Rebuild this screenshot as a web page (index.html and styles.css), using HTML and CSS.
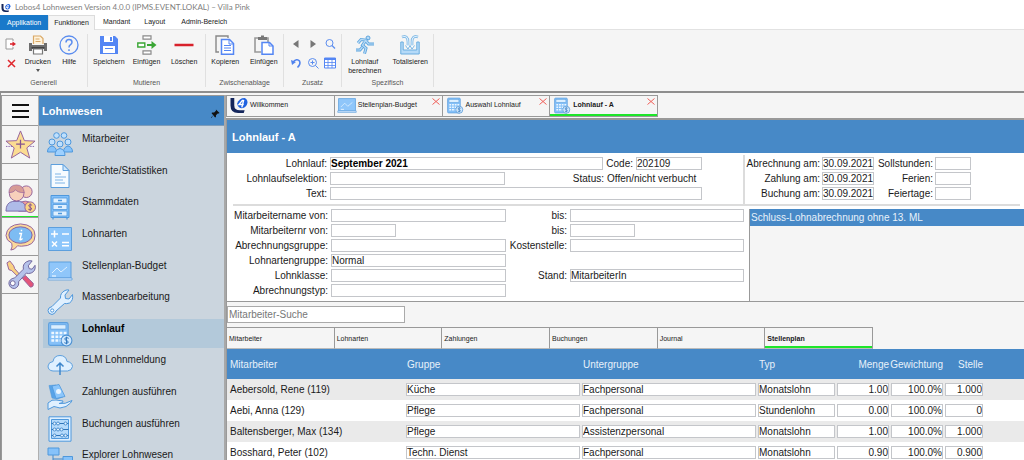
FILE: index.html
```html
<!DOCTYPE html>
<html lang="de">
<head>
<meta charset="utf-8">
<title>Lobos4 Lohnwesen</title>
<link rel="stylesheet" href="styles.css">
</head>
<body>
<svg class="sprite" aria-hidden="true">
  <symbol id="logo" viewBox="0 0 20 18">
    <path d="M1 1h4v8q0 5 6 5h5l-1 3H9Q1 17 1 9z" fill="#14265c"/>
    <path d="M8 7q2-6 8-6 3 1 3 5-1 5-6 6-4 0-5-5z" fill="#1f62e0"/>
    <path d="M14 3l-4 5h5M15 3l-2 8" fill="none" stroke="#fff" stroke-width="1.500"/>
  </symbol>
  <symbol id="chart" viewBox="0 0 26 20">
    <path d="M2 1h22v16H2z" fill="#8fc6fa" stroke="#5d9fdd"/>
    <path d="M1 17h24v2H1z" fill="#d9ecff" stroke="#5d9fdd" stroke-width=".8"/>
    <path d="M5 12l5-5 4 4 6-5" fill="none" stroke="#dff0ff"/><path d="M5 15h4" stroke="#fff"/>
  </symbol>
  <symbol id="calc" viewBox="0 0 24 24">
    <rect x="1.500" y="1.500" width="18" height="21" rx="1.500" fill="#85c0f8" stroke="#5d9fdd"/>
    <rect x="3.500" y="3.500" width="14" height="4" fill="#dcefff" stroke="#5d9fdd" stroke-width=".7"/>
    <path d="M4 11h14M4 14.500h14M4 18h14" stroke="#eef7ff" stroke-width="2.300" stroke-dasharray="2.600 1.200"/>
    <circle cx="18" cy="18" r="5" fill="#cfe7fd" stroke="#4b90d2"/>
    <path d="M20 16q-2-1.500-3.500 0-.5 1.500 1.500 2 2 .6 1.500 2-1.500 1.500-3.500 0M18 14.500v7" fill="none" stroke="#3278bd" stroke-width=".9"/>
  </symbol>
  <symbol id="close" viewBox="0 0 8 7"><path d="M.5.5l7 6M7.500.5l-7 6" stroke="#f0605a" fill="none"/></symbol>
</svg>

<header class="titlebar"><svg class="app-logo"><use href="#logo"/></svg><h1>Lobos4 Lohnwesen Version 4.0.0 (IPMS.EVENT.LOKAL) – Villa Pink</h1></header>

<nav class="menu">
  <button class="menu-tab file">Applikation</button>
  <button class="menu-tab open">Funktionen</button>
  <button class="menu-tab">Mandant</button>
  <button class="menu-tab">Layout</button>
  <button class="menu-tab">Admin-Bereich</button>
</nav>

<section class="ribbon">
  <div class="group generell">
    <div class="tools">
      <div class="stack">
        <button aria-label="Beenden"><svg class="tiny" viewBox="0 0 12 12"><path d="M8 3V1H1v10h7V9" fill="#fff" stroke="#999"/><path d="M5 6h3" stroke="#d9232c" stroke-width="1.500"/><path d="M7.500 3.500L11 6 7.500 8.500z" fill="#d9232c"/></svg></button>
        <button aria-label="Schliessen"><svg class="tiny" viewBox="0 0 12 12"><path d="M3 3l7 7M10 3l-7 7" stroke="#e0262c" stroke-width="1.500"/></svg></button>
      </div>
      <button class="tool"><svg viewBox="0 0 20 20"><path d="M5.500 9V1h7l2.500 2.500V9" fill="#fff3dc" stroke="#d9a866" stroke-width="1.200"/><path d="M7.500 4h4M7.500 6.500h5" stroke="#d9a866"/><path d="M1 8h3v2h12V8h3v8h-3v-2H4v2H1z" fill="#6e6e6e"/><path d="M3.500 12h13v1.500h-13z" fill="#444"/><path d="M5.500 14v5h9v-5z" fill="#fff" stroke="#777" stroke-width="1.200"/></svg>Drucken<i class="caret"></i></button>
      <button class="tool"><svg viewBox="0 0 20 20"><circle cx="10" cy="10" r="9" fill="none" stroke="#5b8def" stroke-width="1.300"/><path d="M7 7.500q0-3 3-3t3 2.700q0 1.600-1.700 2.600-1.300.8-1.300 2.700M10 14.200v1.700" fill="none" stroke="#5b8def" stroke-width="1.500"/></svg>Hilfe</button>
    </div><h2>Generell</h2>
  </div>
  <div class="group mutieren">
    <div class="tools">
      <button class="tool"><svg viewBox="0 0 20 20"><path d="M1 1h15l3 3v15H1z" fill="#5486f4"/><path d="M5 1h9v6H5z" fill="#fff"/><path d="M11 2h2v4h-2z" fill="#5486f4"/><path d="M4 11h12v7H4z" fill="#fff"/><path d="M6 13.500h8" stroke="#5486f4"/></svg>Speichern</button>
      <button class="tool"><svg viewBox="0 0 20 20"><path d="M6 .8h8v3.400H6zM6 15.800h8v3.400H6z" fill="#fff" stroke="#8a8a8a" stroke-width="1.200"/><path d="M.8 8h7v4h-7z" fill="#fff" stroke="#3aa635" stroke-width="1.400"/><path d="M10 10h6" stroke="#3aa635" stroke-width="2"/><path d="M14.500 6l5 4-5 4z" fill="#3aa635"/></svg>Einfügen</button>
      <button class="tool"><svg viewBox="0 0 20 20"><path d="M.5 10h19" stroke="#d8212b" stroke-width="2.500"/></svg>Löschen</button>
    </div><h2>Mutieren</h2>
  </div>
  <div class="group ablage">
    <div class="tools">
      <button class="tool"><svg viewBox="0 0 20 20"><path d="M4 17H1V1h12v2" fill="none" stroke="#888" stroke-width="1.400"/><path d="M6.500 4.500h8l4 4v10.700h-12z" fill="#fff" stroke="#5486f4" stroke-width="1.500"/><path d="M14 4.500V9h4.500" fill="none" stroke="#5486f4"/><path d="M9 10.500h7M9 13h7M9 15.500h7" stroke="#5486f4"/></svg>Kopieren</button>
      <button class="tool"><svg viewBox="0 0 20 20"><path d="M7 17H1V3h3M12 3h2v4" fill="none" stroke="#999" stroke-width="1.600"/><path d="M4 2h3V.5h3V2h3v3H4z" fill="#777"/><path d="M8 7.500h7.500L19 11v8.200H8z" fill="#fff" stroke="#5486f4" stroke-width="1.500"/><path d="M15 7.500V11h4" fill="none" stroke="#5486f4"/></svg>Einfügen</button>
    </div><h2>Zwischenablage</h2>
  </div>
  <div class="group zusatz">
    <div class="tools mini">
      <button aria-label="Zurück"><svg class="tiny" viewBox="0 0 12 12"><path d="M8.500 2v8L3 6z" fill="#777"/></svg></button>
      <button aria-label="Vor"><svg class="tiny" viewBox="0 0 12 12"><path d="M3.500 2v8L9 6z" fill="#777"/></svg></button>
      <button aria-label="Suchen"><svg class="tiny" viewBox="0 0 12 12"><circle cx="5.500" cy="5" r="3.500" fill="none" stroke="#5b8def"/><path d="M8 7.500l3 3" stroke="#5b8def" stroke-width="1.200"/></svg></button>
      <button aria-label="Rückgängig"><svg class="tiny" viewBox="0 0 12 12"><path d="M3 5q4-4 6.500-1Q11 7 7.500 10.500" fill="none" stroke="#4f82ee" stroke-width="1.600"/><path d="M1 3l1 5 4-3z" fill="#4f82ee"/></svg></button>
      <button aria-label="Vergrössern"><svg class="tiny" viewBox="0 0 12 12"><circle cx="5.500" cy="5.500" r="4" fill="none" stroke="#5b8def"/><path d="M8.500 8.500l3 3M3.500 5.500h4M5.500 3.500v4" stroke="#5b8def"/></svg></button>
      <button aria-label="Tabelle"><svg class="tiny" viewBox="0 0 12 12"><path d="M.5 1h11v10H.5z" fill="#fff" stroke="#5486f4"/><path d="M0 2h12" stroke="#5486f4" stroke-width="2"/><path d="M0 5.500h12M0 8.500h12M4 2v9M8 2v9" stroke="#5486f4" stroke-width=".8"/></svg></button>
    </div><h2>Zusatz</h2>
  </div>
  <div class="group spezifisch">
    <div class="tools">
      <button class="tool"><svg viewBox="0 0 20 20"><circle cx="13" cy="3" r="2" fill="#b9dcf8" stroke="#5fa5dd"/><path d="M3 8l3-3.500 5 .7-3.500 5 3.500 3-1.500 5.500M11 6l2.500 3H19M7.500 12l-2.500 3H1" fill="none" stroke="#5fa5dd" stroke-width="3"/><path d="M3 8l3-3.500 5 .7-3.500 5 3.500 3-1.500 5.500M11 6l2.500 3H19M7.500 12l-2.500 3H1" fill="none" stroke="#b9dcf8" stroke-width="1.200"/></svg>Lohnlauf<br>berechnen</button>
      <button class="tool"><svg viewBox="0 0 20 20"><path d="M.8 7v12h18.400V7h-2.400v8H3.200V7z" fill="#b5daf8" stroke="#6aade0"/><path d="M2 2q6-2 6 5v4M18 2q-6-2-6 5v4" fill="none" stroke="#6aade0" stroke-width="2.600"/><path d="M2 2q6-2 6 5v4M18 2q-6-2-6 5v4" fill="none" stroke="#e4f3ff" stroke-width="1.100"/><path d="M5.500 10.500L8 14l2-3.500L12 14l2.500-3.500" fill="#fff" stroke="#6aade0" stroke-width=".9"/></svg>Totalisieren</button>
    </div><h2>Spezifisch</h2>
  </div>
</section>

<div class="workspace">
  <nav class="rail">
    <button class="burger" aria-label="Menü"><i></i><i></i><i></i></button>
    <button aria-label="Favoriten"><svg viewBox="0 0 32 32"><path d="M1 18h30" stroke="#8d6bb0" stroke-dasharray="1.500 1"/><path d="M16 2l4 10 11 .5-8.500 7 3 10.500L16 24l-9.500 6 3-10.500-8.500-7L12 12z" fill="#fbdc92" stroke="#95629b"/><path d="M16 11v9M11.500 15.500h9" stroke="#85538f" stroke-width="1.300"/></svg></button>
    <span class="gap"></span>
    <button class="current" aria-label="Personal"><svg viewBox="0 0 32 32"><circle cx="22" cy="9" r="6" fill="#f5c9b5" stroke="#95629b"/><path d="M14 29V21q8-5 14 1v7z" fill="#ef9a9a" stroke="#95629b"/><path d="M1 29q0-9 7-10h7q7 1 7 10z" fill="#aebbe8" stroke="#786aa8"/><circle cx="12" cy="11" r="7.500" fill="#f8d0bb" stroke="#95629b"/><path d="M4 10q0-8 8-8 7 0 8 8-7 0-9-3-2 3-7 3z" fill="#d79b96" stroke="#95629b" stroke-width=".7"/><circle cx="26" cy="25" r="5.500" fill="#fbd583" stroke="#95629b"/><path d="M28 23q-2-1.500-3.500 0 0 1.500 1.500 2t1.500 2q-1.500 1.500-3.500 0M26 21v8" fill="none" stroke="#85538f"/></svg></button>
    <button aria-label="Information"><svg viewBox="0 0 32 32"><path d="M16 3q15 1 15 12T17 26q-2 0-4-.5Q10 30 6 30q2-3 1-7-6-3-6-8Q2 4 16 3z" fill="#fbd99a" stroke="#95629b"/><ellipse cx="16" cy="14.500" rx="12" ry="8.500" fill="#7dbcf3" stroke="#86609f"/><path d="M17 9v1.500M14.500 13H17l-1.500 6q1 1 2.500-1" fill="none" stroke="#fff" stroke-width="1.500"/></svg></button>
    <button aria-label="Werkzeuge"><svg viewBox="0 0 32 32"><path d="M2 4l3-2 4 5 1 3 8 9-2 2-9-9-3-1z" fill="#f9d083" stroke="#95629b"/><path d="M18 20l3-3 8 8q1 4-3 4z" fill="#e35579" stroke="#95629b"/><path d="M22 3q3-2 6-1l-4 5 1 3 3 .5 3-4q1 6-4 8-3 1-5 0l-8 9q1 5-4 7-5 0-6-5 0-5 6-6l9-9q-1-5 3-7.500z" fill="#b5c2ea" stroke="#6f659c"/><circle cx="8" cy="25" r="2.500" fill="#fff" stroke="#6f659c"/></svg></button>
  </nav>

  <aside class="sidebar">
    <div class="side-head"><h2>Lohnwesen</h2><svg class="pin" viewBox="0 0 10 10"><path d="M5.500.5l4 4-1 .5-1 0-2 2 0 2-1 .5-2-2.500L.5 10 0 9.500 2.500 7 .5 4.500 1.500 4h2L5.500 2z" fill="#111"/></svg></div>
    <ul>
      <li><a href="#"><svg viewBox="0 0 26 26"><g fill="#bfe0fd" stroke="#4f98dc"><circle cx="9.500" cy="4.500" r="2.800"/><circle cx="17" cy="4.500" r="2.800"/><circle cx="5" cy="11" r="3"/><circle cx="21" cy="11" r="3"/><circle cx="13" cy="13" r="3"/><path d="M.5 21q0-5 4.500-6 4.500 1 4.500 6zM16.500 21q0-5 4.500-6 4.500 1 4.500 6z" fill="#86c2fa"/><path d="M8 24.500q0-6 5-7 5 1 5 7z" fill="#9dd0ff"/></g></svg>Mitarbeiter</a></li>
      <li><a href="#"><svg viewBox="0 0 26 26"><path d="M4 1.500h12l6 6v17H4z" fill="#f6fbff" stroke="#5d9fdd"/><path d="M16 1.500v6h6z" fill="#cfe7fd" stroke="#5d9fdd"/><path d="M8 11h6M8 14h11M8 17h8M8 20h10" stroke="#7eb4e6"/></svg>Berichte/Statistiken</a></li>
      <li><a href="#"><svg viewBox="0 0 26 26"><path d="M4 1.500h18v22H4z" fill="#82c0fa" stroke="#4f98dc"/><path d="M6 4h14v5H6zM6 10.500h14v5H6zM6 17h14v5H6z" fill="#dff0ff" stroke="#4f98dc" stroke-width=".8"/><path d="M11 6.500h4M11 13h4M11 19.500h4M6 24v1.500M20 24v1.500" stroke="#4f98dc" stroke-width="1.300"/></svg>Stammdaten</a></li>
      <li><a href="#"><svg viewBox="0 0 26 26"><path d="M1.500 1.500h23v23h-23z" fill="#8cc6fb" stroke="#5d9fdd"/><path d="M4 8h7M7.500 4.500v7M15 8h7M5 15.500l5 5M10 15.500l-5 5M15 16.500h7M15 19.800h7" stroke="#fff" stroke-width="1.500"/></svg>Lohnarten</a></li>
      <li><a href="#"><svg><use href="#chart"/></svg>Stellenplan-Budget</a></li>
      <li><a href="#"><svg viewBox="0 0 26 26"><path d="M18 1.500q2-1 4-.5l-4 5 .5 3.500 3.500.5 3.500-4.500q1 6-3 8.500-3 1-5 .5L9 22q-1 3-4 3.500-4-.5-4-4 0-3 4-4l8.500-8.500Q13 4 18 1.500z" fill="#e0f0ff" stroke="#4f98dc"/><circle cx="5.200" cy="21.500" r="1.600" fill="#fff" stroke="#4f98dc"/></svg>Massenbearbeitung</a></li>
      <li class="active"><a href="#" aria-current="page"><svg><use href="#calc"/></svg>Lohnlauf</a></li>
      <li><a href="#"><svg viewBox="0 0 26 26"><path d="M6 19q-5-.5-5-5 .5-4 5-4.500Q7 3.500 13 3.500t7 6q5 .5 5.500 5-.5 4-5 4.500z" fill="#dff0ff" stroke="#5d9fdd"/><path d="M13 23V12M9.500 14.500L13 11l3.500 3.500" fill="none" stroke="#3f87cc" stroke-width="1.500"/></svg>ELM Lohnmeldung</a></li>
      <li><a href="#"><svg viewBox="0 0 26 26"><path d="M2 1.500l7-.5 7 12-6 2-5-1z" fill="#58a3e8" stroke="#4f98dc" stroke-width=".6"/><path d="M5 2l7-1.500 6 12-9 2z" fill="#8cc6fb" stroke="#4f98dc" stroke-width=".8"/><circle cx="11.500" cy="7.500" r="2.500" fill="#eaf5ff"/><path d="M1 19q4-4 8-3l7 1q1 2-4 2.500 6 1 13-3 0 2-6 6-6 3-12 0l-6 3z" fill="#e0f0ff" stroke="#4f98dc"/></svg>Zahlungen ausführen</a></li>
      <li><a href="#"><svg viewBox="0 0 26 26"><path d="M2 .8h22v24.400H2z" fill="#dff0ff" stroke="#4f98dc"/><path d="M4.500 3.500h17v19h-17z" fill="#b5dafb" stroke="#4f98dc"/><path d="M4.500 7.500h17M4.500 13.500h17M4.500 19.500h17" stroke="#2f74b8"/><g fill="#e6f3ff" stroke="#3d86ca" stroke-width=".9"><circle cx="7.500" cy="7.500" r="1.500"/><circle cx="11" cy="7.500" r="1.500"/><circle cx="18.500" cy="7.500" r="1.500"/><circle cx="7.500" cy="13.500" r="1.500"/><circle cx="11" cy="13.500" r="1.500"/><circle cx="14.500" cy="13.500" r="1.500"/><circle cx="7.500" cy="19.500" r="1.500"/><circle cx="15" cy="19.500" r="1.500"/><circle cx="18.500" cy="19.500" r="1.500"/></g></svg>Buchungen ausführen</a></li>
      <li><a href="#"><svg viewBox="0 0 26 26"><path d="M6 8v12h10M6 12h10" fill="none" stroke="#3f87cc"/><path d="M1 1h11v7H1zM16 9.500h9.500v7H16zM16 19h9.500v6H16z" fill="#86c2fa" stroke="#4f98dc"/></svg>Explorer Lohnwesen</a></li>
    </ul>
  </aside>

  <main>
    <div class="doc-tabs">
      <button><svg class="doc-logo"><use href="#logo"/></svg>Willkommen</button>
      <button><svg class="doc-icon"><use href="#chart"/></svg>Stellenplan-Budget<svg class="x"><use href="#close"/></svg></button>
      <button><svg class="doc-icon"><use href="#calc"/></svg>Auswahl Lohnlauf<svg class="x"><use href="#close"/></svg></button>
      <button class="selected"><svg class="doc-icon"><use href="#calc"/></svg>Lohnlauf - A<svg class="x"><use href="#close"/></svg></button>
    </div>

    <section class="document">
      <h2 class="doc-title">Lohnlauf - A</h2>
      <form class="form">
        <div class="upper">
          <div class="run">
            <label for="lauf">Lohnlauf:</label>
            <div class="line"><input id="lauf" class="strong grow" value="September 2021"><label for="code">Code:</label><input id="code" class="code" value="202109"></div>
            <label for="sel">Lohnlaufselektion:</label>
            <div class="line"><input id="sel" class="mid"><span class="status-label">Status:</span><span>Offen/nicht verbucht</span></div>
            <label for="text">Text:</label>
            <div class="line"><input id="text" class="grow"></div>
          </div>
          <div class="dates">
            <label for="abr">Abrechnung am:</label><input id="abr" value="30.09.2021"><label for="soll">Sollstunden:</label><input id="soll">
            <label for="zahl">Zahlung am:</label><input id="zahl" value="30.09.2021"><label for="fer">Ferien:</label><input id="fer">
            <label for="buch">Buchung am:</label><input id="buch" value="30.09.2021"><label for="fei">Feiertage:</label><input id="fei">
          </div>
        </div>
        <div class="lower">
          <div class="filter">
            <label for="nv">Mitarbeitername von:</label><input id="nv"><label for="nb">bis:</label><input id="nb">
            <label for="rv">Mitarbeiternr von:</label><input id="rv" class="short"><label for="rb">bis:</label><input id="rb" class="short">
            <label for="ag">Abrechnungsgruppe:</label><input id="ag"><label for="ks">Kostenstelle:</label><input id="ks">
            <label for="lg">Lohnartengruppe:</label><input id="lg" value="Normal"><span></span><span></span>
            <label for="lk">Lohnklasse:</label><input id="lk"><label for="st">Stand:</label><input id="st" value="MitarbeiterIn">
            <label for="at">Abrechnungstyp:</label><input id="at">
          </div>
          <div class="list"><p>Schluss-Lohnabrechnung ohne 13. ML</p></div>
        </div>
      </form>

      <input class="search" type="search" placeholder="Mitarbeiter-Suche" aria-label="Mitarbeiter-Suche">

      <div class="sub-tabs">
        <button>Mitarbeiter</button><button>Lohnarten</button><button>Zahlungen</button><button>Buchungen</button><button>Journal</button><button class="selected">Stellenplan</button>
      </div>

      <table>
        <colgroup><col class="c-name"><col class="c-wide"><col class="c-wide"><col class="c-typ"><col class="c-num"><col class="c-num"><col class="c-stelle"><col></colgroup>
        <thead><tr><th>Mitarbeiter</th><th>Gruppe</th><th>Untergruppe</th><th>Typ</th><th class="num">Menge</th><th class="num">Gewichtung</th><th class="num">Stelle</th><th></th></tr></thead>
        <tbody>
          <tr><td>Aebersold, Rene (119)</td><td><input aria-label="Gruppe" value="Küche"></td><td><input aria-label="Untergruppe" value="Fachpersonal"></td><td><input aria-label="Typ" value="Monatslohn"></td><td class="num"><input aria-label="Menge" value="1.00"></td><td class="num"><input aria-label="Gewichtung" value="100.0%"></td><td class="num"><input aria-label="Stelle" value="1.000"></td><td></td></tr>
          <tr><td>Aebi, Anna (129)</td><td><input aria-label="Gruppe" value="Pflege"></td><td><input aria-label="Untergruppe" value="Fachpersonal"></td><td><input aria-label="Typ" value="Stundenlohn"></td><td class="num"><input aria-label="Menge" value="0.00"></td><td class="num"><input aria-label="Gewichtung" value="100.0%"></td><td class="num"><input aria-label="Stelle" value="0"></td><td></td></tr>
          <tr><td>Baltensberger, Max (134)</td><td><input aria-label="Gruppe" value="Pflege"></td><td><input aria-label="Untergruppe" value="Assistenzpersonal"></td><td><input aria-label="Typ" value="Monatslohn"></td><td class="num"><input aria-label="Menge" value="1.00"></td><td class="num"><input aria-label="Gewichtung" value="100.0%"></td><td class="num"><input aria-label="Stelle" value="1.000"></td><td></td></tr>
          <tr><td>Bosshard, Peter (102)</td><td><input aria-label="Gruppe" value="Techn. Dienst"></td><td><input aria-label="Untergruppe" value="Fachpersonal"></td><td><input aria-label="Typ" value="Monatslohn"></td><td class="num"><input aria-label="Menge" value="0.90"></td><td class="num"><input aria-label="Gewichtung" value="100.0%"></td><td class="num"><input aria-label="Stelle" value="0.900"></td><td></td></tr>
        </tbody>
      </table>
    </section>
  </main>
</div>
</body>
</html>
```
FILE: styles.css
```css
* { box-sizing: border-box; }
body {
  margin: 0; height: 100vh; overflow: hidden;
  display: flex; flex-direction: column;
  font: 10px/15px "Liberation Sans", Arial, sans-serif;
  color: #1a1a1a; background: #f5f5f5;
}
h1, h2, p, ul { margin: 0; padding: 0; font-weight: normal; }
ul { list-style: none; }
svg { display: block; flex: none; overflow: visible; }
button { margin: 0; padding: 0; border: 0; background: none; font: inherit; color: inherit; white-space: nowrap; }
input { font: inherit; color: inherit; border-radius: 0; }
.sprite { position: absolute; width: 0; height: 0; }

/* Title and menu */
.titlebar { display: flex; align-items: center; gap: 4px; height: 15px; padding-left: 1px; background: #fff; }
.titlebar h1 { font: 8px/15px Lato, sans-serif; color: #808080; }
.app-logo { width: 10px; height: 10px; }
.menu { display: flex; height: 15px; background: #fff; border-bottom: 1px solid #e2e2e2; font-size: 7px; line-height: 14px; color: #222; }
.menu-tab { padding: 0 7px; }
.menu-tab:last-child { padding-left: 9px; }
.menu-tab.file { background: #1979ca; color: #fff; width: 48px; height: 15px; }
.menu-tab.open { background: #f5f5f5; border: 1px solid #dcdcdc; border-bottom: 0; width: 47px; height: 15px; padding: 0; margin-right: 1px; }

/* Ribbon */
.ribbon { display: flex; flex: none; height: 61px; padding: 4px 0; font-size: 7px; line-height: 9px; color: #222; }
.group { display: flex; flex-direction: column; justify-content: space-between; border-right: 1px solid #e0e0e0; }
.group h2 { font-size: 7px; line-height: 9px; text-align: center; color: #555; }
.tools { display: flex; justify-content: center; }
.tool { display: flex; flex-direction: column; align-items: center; flex: 1; line-height: 9px; }
.tool svg { width: 20px; height: 20px; margin: 1px 0 2px; }
.caret { border: 2px solid transparent; border-top: 3px solid #555; margin-top: 3px; }
.generell { width: 88px; }
.mutieren { width: 118px; }
.ablage { width: 78px; }
.zusatz { width: 58px; }
.spezifisch { width: 92px; }
.generell .tools { padding: 0 2px 0 5px; }
.mutieren .tools { padding: 0 2px; }
.stack { display: flex; flex-direction: column; gap: 7px; padding: 4px 5px 0 0; }
.tiny { width: 12px; height: 12px; }
.mini { display: grid; grid-template-columns: repeat(3, 12px); gap: 7px 5px; padding-top: 4px; }

/* Work area */
.workspace { display: flex; flex: 1; min-height: 0; border-top: 2px solid #8e8e8e; border-left: 1px solid #8e8e8e; padding-top: 2px; }
.rail { width: 37px; flex: none; border-top: 1px solid #999; border-left: 1px solid #999; display: flex; flex-direction: column; }
.rail button, .gap { height: 38px; flex: none; border-bottom: 1px solid #999; display: flex; flex-direction: column; align-items: center; justify-content: center; }
.rail svg { width: 31px; height: 31px; }
.rail .burger { height: 30px; gap: 4px; }
.burger i { width: 17px; height: 2px; background: #111; }
.rail .gap { height: 16px; }
.rail .current { box-shadow: inset 0 -1px #1ee62a; }
.sidebar { width: 186px; flex: none; border-left: 1px solid #b0b0b0; background: #cbd5de; border-top: 1px solid #999; }
.side-head { display: flex; align-items: center; justify-content: space-between; height: 30px; padding: 2px 4px 0 3px; background: #4789c7; border-bottom: 1px solid #7d9cb9; }
.side-head h2 { font-size: 11px; font-weight: bold; color: #fff; }
.pin { width: 9px; height: 9px; margin-top: 3px; }
.sidebar ul { display: grid; grid-auto-rows: 1fr; height: 351px; padding: 3px 0 0 4px; }
.sidebar a { display: flex; gap: 9px; align-items: flex-start; height: 29px; padding-left: 4px; color: inherit; text-decoration: none; line-height: 20px; }
.sidebar a svg { width: 26px; height: 26px; margin-top: 2px; }
.sidebar .active a { background: #b3c9da; font-weight: bold; color: #000; }

main { flex: 1; min-width: 0; display: flex; flex-direction: column; border-left: 2px solid #a8a8a8; }
.doc-tabs { display: flex; height: 22px; margin-bottom: 1px; border-top: 1px solid #999; font-size: 7px; width: 432px; }
.doc-tabs button { flex: 1; display: flex; align-items: flex-start; gap: 1px; padding: 1px 2px; border: 1px solid #999; border-width: 0 0 1px 1px; line-height: 15px; }
.doc-tabs button:last-child { border-right-width: 1px; }
.doc-icon, .doc-logo { width: 20px; height: 17px; }
.x { width: 8px; height: 7px; margin-left: auto; margin-top: 1px; }
button.selected { font-weight: bold; box-shadow: inset 0 -2px #1ee62a; }
.document { flex: 1; min-height: 0; overflow: hidden; border-top: 2px solid #999; border-left: 1px solid #999; }
.doc-title { height: 33px; padding-left: 5px; line-height: 34px; background: #4789c7; color: #fff; font-size: 11px; font-weight: bold; }

/* Form */
.form { background: #fff; border-bottom: 1px solid #999; }
.form input { width: 100%; height: 13px; padding: 0; border: 1px solid #c4c6ca; background: #fff; min-width: 0; }
.form label, .status-label { text-align: right; white-space: nowrap; }
.upper { display: flex; margin: 0 4px 0 6px; padding-top: 2px; border-bottom: 2px solid #dcdcdc; }
.run { width: 512px; display: grid; grid-template-columns: 94px 372px; column-gap: 3px; grid-auto-rows: 15px; align-items: center; padding-top: 1px; height: 49px; border-right: 2px solid #dcdcdc; }
.line { display: flex; align-items: center; gap: 3px; }
.form .grow { flex: 1; }
.form .code { width: 66px; }
.form .mid { width: 175px; }
.status-label { width: 96px; }
.form .strong { font-weight: bold; color: #000; }
.dates { display: grid; grid-template-columns: 75px 52px 57px 36px; column-gap: 2px; grid-auto-rows: 15px; align-items: center; padding-top: 1px; }
.lower { display: flex; padding-top: 2px; }
.filter { display: grid; grid-template-columns: 101px 175px 58px 174px; column-gap: 3px; grid-auto-rows: 15px; align-items: center; padding-bottom: 3px; }
.form .short { width: 65px; }
.list { flex: 1; margin: 1px 0 0 5px; border-left: 1px solid #999; background: #f5f5f5; }
.list p { padding-left: 1px; line-height: 17px; background: #4789c7; color: #e8f1fa; }

.search { display: block; width: 178px; height: 17px; margin: 4px 0; padding: 0 1px; border: 1px solid #aaa; background: #fff; appearance: none; }
.search::placeholder { color: #777; opacity: 1; }
.sub-tabs { display: flex; width: 646px; height: 22px; border-top: 1px solid #999; font-size: 7px; }
.sub-tabs button { flex: 1; padding: 0 2px; text-align: left; border-right: 1px solid #999; border-bottom: 1px solid #bbb; }

/* Table */
table { width: 100%; table-layout: fixed; border-collapse: collapse; }
.c-name { width: 178px; }
.c-wide { width: 176px; }
.c-typ { width: 79px; }
.c-num { width: 54px; }
.c-stelle { width: 40px; }
th { height: 30px; padding: 1px 2px 0; background: #4789c7; color: #e8f1fa; font-weight: normal; text-align: left; white-space: nowrap; }
td { height: 21px; padding: 0 1px; white-space: nowrap; }
td:first-child, th:first-child { padding-left: 3px; }
th.num { padding: 1px 1px 0 0; }
.num, .num input { text-align: right; }
tbody tr { background: #fff; }
tbody tr:nth-child(odd) { background: #eaeaea; }
td input { display: block; width: 100%; height: 13px; padding: 0; border: 1px solid #c4c6ca; background: #fff; }
```
